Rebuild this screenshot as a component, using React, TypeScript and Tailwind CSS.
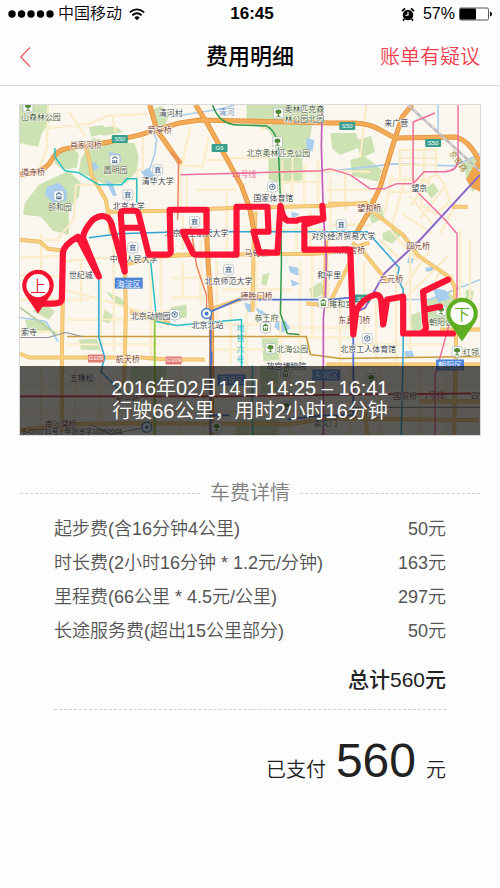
import React from "react";

const FONT = 'font-["Liberation_Sans","Noto_Sans_CJK_SC",sans-serif]';

const PARKS = [
  "M19 105h28l2 16-8 12-4 14-18-4z",
  "M92 138l20 4 22 1 4 14-2 14-10 12-22 2-14-8-12-4 2-14z",
  "M38 185l30-14 12 12-2 14-10 12 0 26-16-4-12-14-18-2 2-12z",
  "M54 156l16-10 8 8-2 14-14 2-8-6z",
  "M88 127l14-2 4 8-16 4z",
  "M96 128l18-2 8 6-20 4z",
  "M150 110l10-4 10 6-6 14-12-2z",
  "M246 105h76v16l-10 4-4 22-6 10-12 1-14-14-8-14-22-8z",
  "M268 158h34v22l-16 4-18-4z",
  "M330 133l26 0 4 14-20 8-8-6z",
  "M355 140l16-4 4 16-14 6z",
  "M350 160l14-4 18 14-4 12-26-6z",
  "M464 160l12-4 4 30-8 6-6-14z",
  "M370 198l12 10 2 10-12 6-5-12z",
  "M425 189l8-6 6 8-8 8z",
  "M382 234l12-6 8 6-10 10-9-4z",
  "M105 292l14 6 9 8-12-1z",
  "M104 310l8 6-4 8-7-3z",
  "M78 340l18-1 4 12-20-1z",
  "M170 308l16-3v13l-16 2z",
  "M262 275l7-2-3 13-5-1z",
  "M309 289l12-7 3 12-13 6z",
  "M261 338l16-2 2 24-16 2z",
  "M410 316l10-4 2 18-10 2z",
  "M427 300l22-8 8 10-4 24-26-2z",
  "M466 290l8 2-2 10-7-2z",
  "M24 320l20 2 6 10-22 2z",
  "M130 367h36v14l-20 6-16-6z",
  "M259 366h18l2 26-18 2z",
  "M40 300l14 12-6 8-16-8z",
  "M238 420h40v16h-44z",
];

const LAKES = [
  "M46 187l12-4 8 8 0 10-14 2-8-8z",
  "M86 164l8-2 4 6-8 4z",
  "M108 152l12 2 0 8-10 2z",
  "M140 172l8-4 6 8-8 4z",
  "M104 180l8 4 4 12-4 0z",
  "M306 138l8 2-2 12-6-4z",
  "M291 212l8 2-3 4-5-1z",
  "M288 266l10 2 0 8-8-3z",
  "M290 280l10 4-8 3z",
  "M244 303l6 2 2 8-6-1z",
  "M255 308l8 4 6 6-10-2z",
  "M275 322l10-1 5 8-8 4-8-5z",
  "M408 258l6 1-2 5-5-1z",
  "M425 268l8-1 0 4-7 1z",
  "M432 288l14 3 4 8-12 4z",
  "M404 352l8-1 2 6-8 2z",
];

const LANES =
  "M47 105l-1 44-8 20M47 128l40-4 20-8 40-2M68 112l16 24M112 118l4 20M142 134v34l-6 4v30M75 185h20M75 185l-2 34-16 20M19 240h40M19 258l44-2M40 235v60M19 275l40 2M64 290l36 10 40 12 40 0M62 262l36-4 26 2M80 262v40M100 282v70M113 232v120M19 300h70M19 332h42M66 320h96M66 345h92M150 262v100M160 255v60M182 216v34M190 126l-10 44v40M176 165l26 2 6-30M226 158h44M226 194l0 60M196 190h40M186 178v30M206 160h26M260 130l14-8M238 215v36M253 216v92M246 230h80M296 216v40M310 210v44M200 240v66M216 260v60M170 278h40M170 298h34M182 262v34M222 290h70M230 304v60M246 310v58M256 262v46M300 262v100M312 252v88M328 262v50M280 300v68M340 296v72M262 338h96M222 325h46M214 350h50M290 328h70M350 345h100M364 262v70M376 300v60M396 262v100M410 250v100M330 225h40M326 190h46M326 171l44 1M330 178v60M345 170v40M366 105l-6 52M398 150h40M398 158h40M398 165h38M400 150v30M412 150v30M424 148v30M436 150v24M388 180h40M386 192l38 0M392 175l-8 40M406 175l-14 50M420 184l16-10 8 10 6 18-14 12-14-8-2-16M410 196l22 28M402 214l30 20M430 180l-20 26M446 185l-26 34M456 204l-16 30M380 240l20 20M390 230l28 32M430 250l-28 40M448 256l-40 40M440 270l-8 20M470 240v60M460 230v100M282 160v50M292 150v60M304 165v40M318 160v50M270 172h56M278 182h44M40 366v70M74 366v70M100 366v70M152 370v66M180 366v70M204 370v66M250 370v66M290 370v66M350 366v70M380 366v70M420 366v70M446 366v70M19 385h461M19 412h461";

const ROADS =
  "M84 144l4 14 3 18 14 24 3 16 2 16 14 22 1 60-1 48-1 25M107 212l60-1 70-3 90-2 40-3M19 240l20 2 8 7 16 2M125 265l30-8 40-2 120-1 30-3 24-8M255 212l-2 40-1 60M175 255l30 0M19 354l9 4h112l28 2h36M62 252l0 40-1 60 0 80M19 431l50-6 60-1 160 1 40-6 150 2M352 258l-24 48-22-2M212 309l30-10 24-2M368 204l-40 0M370 210l34 26M352 243l10 8 26 32M402 234l16 22 32 22 5 10 1 60-2 90M324 300l2-60M129 312l40 12M452 207h16M440 330h40M326 365h154M420 402h60M364 406l3 30";

const HIGHWAYS =
  "M19 175c14-2 22-3 30-12 4-7 8-14 20-15l40-6 30-7 30-9 10-3 20-3 132 3h20c24 0 30 9 44 15l60-1c12 3 18 12 22 20l10 18M195 105l12 19 22 40 12 22 8 22 8 42M149 105l7 25 24 34M412 105l-10 12-8 24-14 46-12 26-14 24M205 210l2 45 4 60v121";

const BROWN_LINES = "M66 337h240l4 18 30 4 140-2";

type Label = [string, number, number, string?];

const LABELS: Label[] = [
  ["山森林公园", 20, 120, "g"],
  ["清河村", 158, 116],
  ["箭亭桥", 147, 133, "b"],
  ["肖家河桥", 69, 148, "b"],
  ["道寺桥", 20, 175, "b"],
  ["圆明园", 103, 173, "g"],
  ["清华大学", 141, 184],
  ["北京大学", 112, 209],
  ["颐和园", 47, 210, "g"],
  ["奥林匹克森", 284, 112, "g"],
  ["林公园北园", 284, 122, "g"],
  ["北京奥林匹克公园", 246, 156, "g"],
  ["国家体育馆", 253, 201],
  ["来广营", 384, 126],
  ["望京", 411, 191],
  ["望和桥", 357, 211, "b"],
  ["北京航空航天大学", 164, 236],
  ["对外经济贸易大学", 311, 239],
  ["中国人民大学", 109, 262],
  ["世纪城", 68, 278],
  ["太阳宫桥", 333, 253, "b"],
  ["马甸桥", 244, 256, "b"],
  ["四元桥", 406, 249, "b"],
  ["三元桥", 379, 282, "b"],
  ["和平里", 317, 278],
  ["北京师范大学", 204, 284],
  ["德胜门桥", 240, 299, "b"],
  ["雍和宫", 329, 307, "g"],
  ["北京动物园", 130, 319],
  ["北京北站", 191, 328],
  ["恭王府", 254, 321, "g"],
  ["东直门桥", 338, 323, "b"],
  ["朝阳公园", 429, 325, "g"],
  ["索寺", 20, 336],
  ["航天桥", 115, 363, "b"],
  ["北海公园", 276, 353, "g"],
  ["北京工人体育馆", 340, 353],
  ["红领", 463, 356, "g"],
  ["故宫博物院", 266, 370],
  ["五棵松", 69, 382],
  ["新兴桥", 115, 403, "b"],
  ["南沙窝桥", 44, 428, "b"],
  ["国贸桥", 393, 400, "b"],
  ["四", 471, 400, "b"],
  ["崇文门", 313, 427, "g"],
];

const LABEL_FILL: Record<string, string> = {
  k: "#2f3848",
  b: "#6e2f26",
  g: "#3c5335",
};

const POIS: [number, number, string][] = [
  [27, 107, "tree"],
  [114, 160, "site"],
  [58, 196, "site"],
  [157, 170, "school"],
  [127, 195, "school"],
  [278, 113, "tree"],
  [277, 142, "tree"],
  [272, 187, "ring"],
  [194, 222, "school"],
  [341, 225, "school"],
  [132, 248, "school"],
  [228, 270, "school"],
  [323, 303, "site"],
  [174, 315, "ring"],
  [265, 328, "site"],
  [270, 349, "tree"],
  [367, 339, "ring"],
  [441, 311, "tree"],
  [457, 352, "tree"],
  [216, 428, "tree"],
  [371, 379, "tree"],
  [286, 407, "tree"],
  [285, 374, "site"],
];

const SHIELDS: [string, number, number, string][] = [
  ["S50", 119, 139, "#3a9e8d"],
  ["G6", 219, 148, "#3a9e8d"],
  ["S50", 347, 126, "#3a9e8d"],
  ["S50", 433, 143, "#3a9e8d"],
  ["S12", 362, 299, "#3a9e8d"],
  ["G109", 95, 359, "#e07a70"],
  ["G109", 173, 361, "#e07a70"],
];

const DISTRICTS: [string, number, number][] = [
  ["海淀区", 128, 283],
  ["西城区", 231, 380],
  ["东城区", 326, 375],
  ["朝阳区", 450, 365],
];

const ROUTE =
  "M40 304H53Q61 304 61 299L62 253Q63 245 77 237L98 277L82 238Q83 230 92 220Q100 214 107 218Q111 222 112 229L124 272L120 215Q120 211 124 211H134Q137 211 138 215L148 255H166Q171 255 170 250L169 210H206V232H182L192 253Q193 255 196 255H236V207H267L268 232H253L259 253H277L280 206Q283 221 288 221H296Q301 218 323 219L322 206M323 219L304 225V250H350L353 335L356 311Q362 299 375 295Q380 295 381 301L383 325L387 300L403 297L403 334H420Q428 332 425 323L423 292L448 280M426 310L440 307M424 334H453M122 228H138";

function Poi({ x, y, kind }: { x: number; y: number; kind: string }) {
  const color = kind === "tree" || (kind === "site" && x > 260) ? "#4f8a35" : "#4e6d8d";
  return (
    <g transform={`translate(${x} ${y})`} stroke={color} fill="none">
      <path d="M-3-5H3Q5-5 5-3V3Q5 5 3 5H1L0 7-1 5H-3Q-5 5-5 3V-3Q-5-5-3-5Z" fill="#fff" stroke="#a9b4bb" strokeWidth="0.7" />
      {kind === "tree" && (
        <>
          <ellipse cy="-1.2" rx="3" ry="2.2" fill={color} stroke="none" />
          <path d="M0 0V3.4M-2 3.3H2" />
        </>
      )}
      {kind === "school" && <path d="M-3.2-2H3.2M-2.6 0H2.6M-3.2 2.4H3.2M0-3.4V-2M-1.4-2V2.4M1.4-2V2.4" strokeWidth="0.9" />}
      {kind === "site" && <path d="M-2.8-1L0-3.2 2.8-1M-2 0V2.8H2V0M0 0V3" strokeWidth="1.1" />}
      {kind === "ring" && (
        <>
          <circle r="2.8" />
          <path d="M-1.5-.5H1.5M0-1.5V1.5" strokeWidth="0.8" />
        </>
      )}
    </g>
  );
}

function Pin({ x, y, color, text }: { x: number; y: number; color: string; text: string }) {
  return (
    <g transform={`translate(${x} ${y})`}>
      <path d="M0 28L-13 9A15.8 15.8 0 1 1 13 9Z" fill={color} />
      <circle r="11.6" fill="#fff" />
      <text y="6" textAnchor="middle" fontSize="16" fill={color}>
        {text}
      </text>
    </g>
  );
}

function RouteMap() {
  return (
    <svg viewBox="19 105 461 331" className="block h-auto w-full" role="img" aria-label="行程路线地图">
      <rect x="19" y="105" width="461" height="331" fill="#fbf7ee" />
      <g fill="#cde2b3">
        {PARKS.map((d) => (
          <path key={d} d={d} />
        ))}
      </g>
      <g fill="#a9cdec">
        {LAKES.map((d) => (
          <path key={d} d={d} />
        ))}
      </g>
      <g fill="none" strokeLinejoin="round">
        <path d="M152 130l4 10-2 14-6 18 4 12M170 117l50-8 14-4M438 105v26M324 172l70-8 60 2 26-12M380 300l50 0 50-20M19 318l26 4 12 20M268 362l6 10" stroke="#a9cdec" strokeWidth="1.6" />
        <path d={LANES} stroke="#f8e3bb" strokeWidth="2" />
        <path d={LANES} stroke="#fef3d3" strokeWidth="1" />
        <path d={ROADS} stroke="#eab964" strokeWidth="4" />
        <path d={ROADS} stroke="#f9cf7e" strokeWidth="2.6" />
        <path d={HIGHWAYS} stroke="#e2913c" strokeWidth="5" />
        <path d={HIGHWAYS} stroke="#f3ab58" strokeWidth="3.4" />
        <path d="M466 180l10-18 4 2v28l-8-4z" fill="#f0a24d" />
        <path d={BROWN_LINES} stroke="#c99a3c" strokeWidth="1.6" />
        <path d="M408 105l72 66" stroke="#b9b9b9" strokeWidth="2.4" />
        <path d="M408 105l72 66" stroke="#f1f1f1" strokeWidth="1" strokeDasharray="4 4" />
        <path d="M19 338h28l18-5 16 4M90 425l20 10 40-8M350 408h130M330 420l30-12" stroke="#8f9498" strokeWidth="1.2" />
        <path d="M19 308l38 28" stroke="#b7cfa4" strokeWidth="2" />
        <path d="M54 148v9l10 14 14 2 20 12h23l5-6h10v24M150 262l6 60 20 4 30-3 35-3v48M252 366v70" stroke="#29c0c8" strokeWidth="1.5" />
        <path d="M88 238l30-4 62-2h145l42 0 18 20 14 16-2 10 6 12v60l-2 86M98 278l0 60 6 20-4 14 20 20" stroke="#2fa5d4" strokeWidth="1.5" />
        <path d="M212 105c4 12 12 20 26 20l28 1c8 4 11 12 12 24l2 50 1 62-1 52 7 20 12 1" stroke="#2f9a49" strokeWidth="1.5" />
        <path d="M180 175l140-4 10-2 20 6 20 14h14l12-5h17l11-12h20q13-1 14-10l0-57M413 189v-67l22-9M415 190l30 30 12 14v62l-22 80 0 60" stroke="#ee6f9d" strokeWidth="1.5" />
        <path d="M322 105l-1 40 2 70 3 44-1 40-2 20v117" stroke="#c25cc0" strokeWidth="1.7" />
        <path d="M480 175l-60 65-36 34-19 34-12 6" stroke="#8c67c8" strokeWidth="2" />
        <path d="M210 436v-124l28-12h92l40-4M211 352v13M353 336v80h-30l-36 4M211 416h18" stroke="#5171cf" strokeWidth="1.8" />
        <path d="M190 226l6 40 10 30v18M170 152l8 8-1 60" stroke="#e9855d" strokeWidth="1.5" />
        <path d="M154 320v116" stroke="#98c93d" strokeWidth="2" />
        <path d="M19 397h210l140-2 111-1" stroke="#d42a35" strokeWidth="1.6" />
      </g>

      {POIS.map(([x, y, kind]) => (
        <Poi key={`${x}-${y}`} x={x} y={y} kind={kind} />
      ))}
      <circle cx="206" cy="314" r="5" fill="#fff" stroke="#4a7dd0" strokeWidth="1.4" />
      <circle cx="206" cy="314" r="2" fill="#4a7dd0" />
      <circle cx="146" cy="428" r="5" fill="#fff" stroke="#4a7dd0" strokeWidth="1.4" />
      <circle cx="146" cy="428" r="2" fill="#4a7dd0" />

      {LABELS.map(([text, x, y, tone = "k"]) => (
        <text key={text} x={x} y={y} fontSize="8" fill={LABEL_FILL[tone]} stroke="#fffdf6" strokeWidth="1" paintOrder="stroke">
          {text}
        </text>
      ))}
      <text x="21" y="435" fontSize="7" fill="#2f3848">S-070711号 | 甲测资字11002001</text>
      <text x="218" y="115" fontSize="8" fill="#6c93c4">清河</text>
      <text x="231" y="177" fontSize="8" fill="#e85f92">15号线</text>
      <text x="424" y="399" fontSize="8" fill="#e0355a">1号线</text>
      <text transform="translate(449 153) rotate(55)" fontSize="8" fill="#8a7a20">京密路</text>
      <text fontSize="8" fill="#29b7c8">
        <tspan x="236" y="331">地</tspan>
        <tspan x="236" y="342">铁</tspan>
        <tspan x="236" y="353">六</tspan>
        <tspan x="236" y="364">号</tspan>
      </text>

      {SHIELDS.map(([text, x, y, fill]) => (
        <g key={`${x}-${y}`}>
          <rect x={x - 8} y={y - 4} width="16" height="8" rx="1" fill={fill} />
          <text x={x} y={y + 2} textAnchor="middle" fontSize="6" fill="#fff">{text}</text>
        </g>
      ))}
      {DISTRICTS.map(([text, x, y]) => (
        <g key={text}>
          <rect x={x - 14} y={y - 5} width="28" height="11" fill="#4d85d8" />
          <text x={x} y={y + 4} textAnchor="middle" fontSize="8" fill="#fff">{text}</text>
        </g>
      ))}

      <path d={ROUTE} fill="none" stroke="#fb1436" strokeWidth="6.2" strokeLinecap="round" strokeLinejoin="round" />
      <Pin x={37} y={286} color="#f4122f" text="上" />
      <Pin x={462} y={314} color="#5fae22" text="下" />
    </svg>
  );
}

function StatusBar() {
  return (
    <div className="grid h-7 grid-cols-3 items-center px-2 text-black">
      <div className="flex items-center gap-1">
        <svg width="46" height="8" viewBox="0 0 46 8" aria-hidden="true">
          {[4, 13.5, 23, 32.5, 42].map((cx) => (
            <circle key={cx} cx={cx} cy="4" r="3.7" />
          ))}
        </svg>
        <span className="text-base leading-5 font-[350]">中国移动</span>
        <svg width="18" height="13" viewBox="0 0 20 14" className="ml-0.5" fill="none" stroke="#000" aria-hidden="true">
          <path d="M2 4.7Q10-2 18 4.7M4.8 7.8Q10 3.4 15.2 7.8" strokeWidth="2" />
          <path d="M7 10.2Q10 7.6 13 10.2L10 13.4Z" fill="#000" stroke="none" />
        </svg>
      </div>
      <span className="pl-1 text-center text-[17px] leading-5 font-bold">16:45</span>
      <div className="flex items-center justify-end gap-1">
        <svg width="14" height="15" viewBox="0 0 14 15" className="mr-1" aria-hidden="true">
          <circle cx="7" cy="8" r="5.3" />
          <path d="M1 4.2L4 1.4M13 4.2L10 1.4M3.2 12L2 13.6M10.8 12L12 13.6" stroke="#000" strokeWidth="1.8" />
          <path d="M7 4.8V8.3H4.4" stroke="#fff" strokeWidth="1.1" fill="none" />
        </svg>
        <span className="text-base leading-5">57%</span>
        <svg width="33" height="14" viewBox="0 0 33 14" aria-hidden="true">
          <rect x="0.5" y="1" width="29" height="12" rx="1.5" fill="#fff" stroke="#555" />
          <rect x="1" y="1.5" width="16" height="11" rx="1" />
          <path d="M31 4.5Q33 5 33 7T31 9.5Z" />
        </svg>
      </div>
    </div>
  );
}

const FEES = [
  ["起步费(含16分钟4公里)", "50元"],
  ["时长费(2小时16分钟 * 1.2元/分钟)", "163元"],
  ["里程费(66公里 * 4.5元/公里)", "297元"],
  ["长途服务费(超出15公里部分)", "50元"],
];

export default function App() {
  return (
    <div className={`min-h-screen bg-[#fdfdfd] ${FONT}`}>
      <StatusBar />
      <header className="grid h-[58px] grid-cols-3 items-center border-b border-[#dcdcdc] px-5">
        <button type="button" aria-label="返回" className="justify-self-start">
          <svg width="11" height="20" viewBox="0 0 11 20" fill="none" stroke="#f0525f" strokeWidth="1.2">
            <path d="M10 .5L.8 10 10 19.5" />
          </svg>
        </button>
        <h1 className="text-center text-[22px] leading-7 font-medium whitespace-nowrap text-black">费用明细</h1>
        <a href="#dispute" className="justify-self-end text-xl leading-7 font-[350] whitespace-nowrap text-[#f0404e]">
          账单有疑议
        </a>
      </header>

      <main className="font-[350]">
        <section className="relative mx-[19px] mt-[18px] border border-[#d8d8d8]">
          <RouteMap />
          <div className="absolute inset-x-0 bottom-0 bg-[#141414]/70 pt-[11px] pb-3 text-center text-xl leading-[23px] text-white">
            <p>2016年02月14日 14:25 – 16:41</p>
            <p>行驶66公里，用时2小时16分钟</p>
          </div>
        </section>

        <section className="px-5 pt-[43px]">
          <div className="flex items-center gap-2.5">
            <span className="flex-1 border-t border-dashed border-[#d0d0d0]" />
            <h2 className="text-xl leading-7 text-[#808080]">车费详情</h2>
            <span className="flex-1 border-t border-dashed border-[#d0d0d0]" />
          </div>
          <div className="px-[34px]">
            <table className="mt-[5px] w-full text-lg leading-[34px] text-[#555]">
              <tbody>
                {FEES.map(([name, amount]) => (
                  <tr key={name}>
                    <th scope="row" className="p-0 text-left font-[350]">{name}</th>
                    <td className="p-0 text-right">{amount}</td>
                  </tr>
                ))}
              </tbody>
            </table>
            <p className="mt-[18px] border-b border-dashed border-[#d0d0d0] pb-[15px] text-right text-[21px] leading-7 font-medium text-[#222]">
              总计560元
            </p>
            <p className="flex items-baseline justify-end gap-2.5 pt-[23px] text-xl text-[#222]">
              <span>已支付</span>
              <span className="text-5xl leading-[56px]">560</span>
              <span>元</span>
            </p>
          </div>
        </section>
      </main>
    </div>
  );
}
